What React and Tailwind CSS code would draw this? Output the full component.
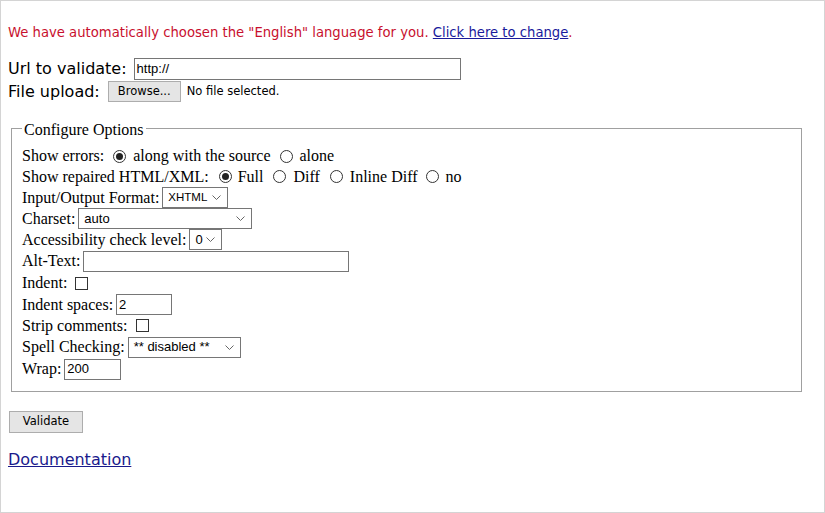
import React from 'react';

const sans = 'font-["DejaVu_Sans",Verdana,sans-serif]';
const serif = 'font-["Liberation_Serif","Times_New_Roman",serif]';
const arial = 'font-["Liberation_Sans",Arial,sans-serif]';

function Radio({ checked, className = '' }) {
  return (
    <span
      className={`inline-flex h-[13px] w-[13px] shrink-0 items-center justify-center rounded-full border border-[#333] bg-white ${className}`}
    >
      {checked && <span className="h-[7px] w-[7px] rounded-full bg-[#222]" />}
    </span>
  );
}

function Checkbox({ className = '' }) {
  return <span className={`inline-block h-[13px] w-[13px] shrink-0 border border-[#333] bg-white ${className}`} />;
}

function Chevron() {
  return (
    <svg width="9" height="5" viewBox="0 0 9 5" className="shrink-0">
      <path d="M0.5 0.5 L4.5 4.5 L8.5 0.5" fill="none" stroke="#666" strokeWidth="1" />
    </svg>
  );
}

function Select({ value, width, size = 'text-[13px]' }) {
  return (
    <span
      className={`ml-[3px] inline-flex h-[21px] items-center justify-between border border-[#767676] bg-white pl-[5px] pr-[6px] text-black ${size} ${arial} ${width}`}
    >
      <span>{value}</span>
      <Chevron />
    </span>
  );
}

function TextBox({ value = '', width }) {
  return (
    <span
      className={`ml-[3px] inline-flex h-[21px] items-center border border-[#767676] bg-white pl-[2px] text-[13px] text-black ${arial} ${width}`}
    >
      {value}
    </span>
  );
}

function Row({ h, children }) {
  return <div className={`flex items-center whitespace-pre ${h}`}>{children}</div>;
}

export default function App() {
  return (
    <div className="h-[513px] w-[825px] border border-[#d4d4d4] bg-white px-[7px] pt-[24px] text-black">
      <div className={`text-[13.2px] leading-[16px] text-[#c8102e] ${sans}`}>
        We have automatically choosen the "English" language for you.{' '}
        <a href="#" className="text-[#1a1a9c] underline">Click here to change</a>.
      </div>

      <div className={`mt-[16px] flex h-[23px] items-center text-[16px] ${sans}`}>
        <span>Url to validate:</span>
        <span className={`ml-[7px] inline-flex h-[22px] w-[327px] items-center border border-[#767676] pl-[2px] text-[13px] ${arial}`}>
          http://
        </span>
      </div>
      <div className={`flex h-[23px] items-center text-[16px] ${sans}`}>
        <span>File upload:</span>
        <button className="ml-[8px] h-[21px] w-[73px] border border-[#adadad] bg-[#e5e5e5] text-[11.5px]">
          Browse...
        </button>
        <span className="ml-[6px] text-[11.5px]">No file selected.</span>
      </div>

      <fieldset className={`ml-[3px] mt-[13px] w-[791px] border border-[#a0a0a0] pb-[11px] pl-[10px] pt-[6px] text-[16px] ${serif}`}>
        <legend className="px-[2px] pt-[4px] leading-[20px]">Configure Options</legend>

        <Row h="h-[20px]">
          <span>Show errors:</span>
          <Radio checked className="ml-[9px]" />
          <span className="ml-[7px]">along with the source</span>
          <Radio className="ml-[9px]" />
          <span className="ml-[7px]">alone</span>
        </Row>
        <Row h="h-[21px]">
          <span>Show repaired HTML/XML:</span>
          <Radio checked className="ml-[10px]" />
          <span className="ml-[6px]">Full</span>
          <Radio className="ml-[10px]" />
          <span className="ml-[7px]">Diff</span>
          <Radio className="ml-[10px]" />
          <span className="ml-[7px]">Inline Diff</span>
          <Radio className="ml-[8px]" />
          <span className="ml-[7px]">no</span>
        </Row>
        <Row h="h-[21px]">
          <span>Input/Output Format:</span>
          <Select value="XHTML" width="w-[66px]" size="text-[11.5px]" />
        </Row>
        <Row h="h-[21px]">
          <span>Charset:</span>
          <Select value="auto" width="w-[174px]" />
        </Row>
        <Row h="h-[21px]">
          <span>Accessibility check level:</span>
          <Select value="0" width="w-[33px]" />
        </Row>
        <Row h="h-[22px]">
          <span>Alt-Text:</span>
          <TextBox width="w-[266px]" />
        </Row>
        <Row h="h-[22px]">
          <span>Indent:</span>
          <Checkbox className="ml-[8px]" />
        </Row>
        <Row h="h-[21px]">
          <span>Indent spaces:</span>
          <TextBox value="2" width="w-[56px]" />
        </Row>
        <Row h="h-[21px]">
          <span>Strip comments:</span>
          <Checkbox className="ml-[9px]" />
        </Row>
        <Row h="h-[22px]">
          <span>Spell Checking:</span>
          <Select value="** disabled **" width="w-[113px]" />
        </Row>
        <Row h="h-[22px]">
          <span>Wrap:</span>
          <TextBox value="200" width="w-[57px]" />
        </Row>
      </fieldset>

      <button className={`ml-[1px] mt-[19px] h-[22px] w-[74px] border border-[#adadad] bg-[#e5e5e5] text-[11.5px] ${sans}`}>
        Validate
      </button>

      <div className={`mt-[17px] text-[16px] leading-[20px] ${sans}`}>
        <a href="#" className="text-[#1a1a8c] underline">Documentation</a>
      </div>
    </div>
  );
}
